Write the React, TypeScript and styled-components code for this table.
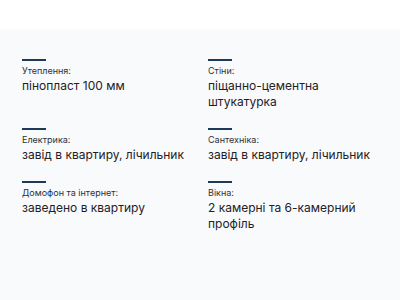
import React from "react";
import styled, { createGlobalStyle } from "styled-components";

const GlobalStyle = createGlobalStyle`
  html, body {
    margin: 0;
    padding: 0;
    background: #f8fafc;
    font-family: Inter, "Noto Sans", sans-serif;
  }
`;

const Page = styled.div`
  width: 400px;
  height: 300px;
  display: flex;
  flex-direction: column;
  background: #f8fafc;
  overflow: hidden;
`;

const TopBand = styled.div`
  height: 31px;
  background: linear-gradient(#ffffff 0, #ffffff 28px, #f8fafc 31px);
  flex-shrink: 0;
`;

const Grid = styled.div`
  display: grid;
  grid-template-columns: 186px 172px;
  row-gap: 18px;
  padding: 28px 0 0 22px;
`;

const Item = styled.div`
  display: flex;
  flex-direction: column;
`;

const Bar = styled.div`
  width: 24px;
  height: 2px;
  background: #1d3a58;
  margin-bottom: 4px;
`;

const Label = styled.div`
  font-size: 9px;
  line-height: 12px;
  color: #2e3136;
`;

const Value = styled.div`
  margin-top: 1px;
  font-size: 12px;
  line-height: 16px;
  color: #1f2126;
`;

const specs = [
  { label: "Утеплення:", value: "пінопласт 100 мм" },
  { label: "Стіни:", value: "піщанно-цементна штукатурка" },
  { label: "Електрика:", value: "завід в квартиру, лічильник" },
  { label: "Сантехніка:", value: "завід в квартиру, лічильник" },
  { label: "Домофон та інтернет:", value: "заведено в квартиру" },
  { label: "Вікна:", value: "2 камерні та 6-камерний профіль" },
];

const App: React.FC = () => {
  return (
    <>
      <GlobalStyle />
      <Page>
        <TopBand />
        <Grid>
          {specs.map((s) => (
            <Item key={s.label}>
              <Bar />
              <Label>{s.label}</Label>
              <Value>{s.value}</Value>
            </Item>
          ))}
        </Grid>
      </Page>
    </>
  );
};

export default App;
